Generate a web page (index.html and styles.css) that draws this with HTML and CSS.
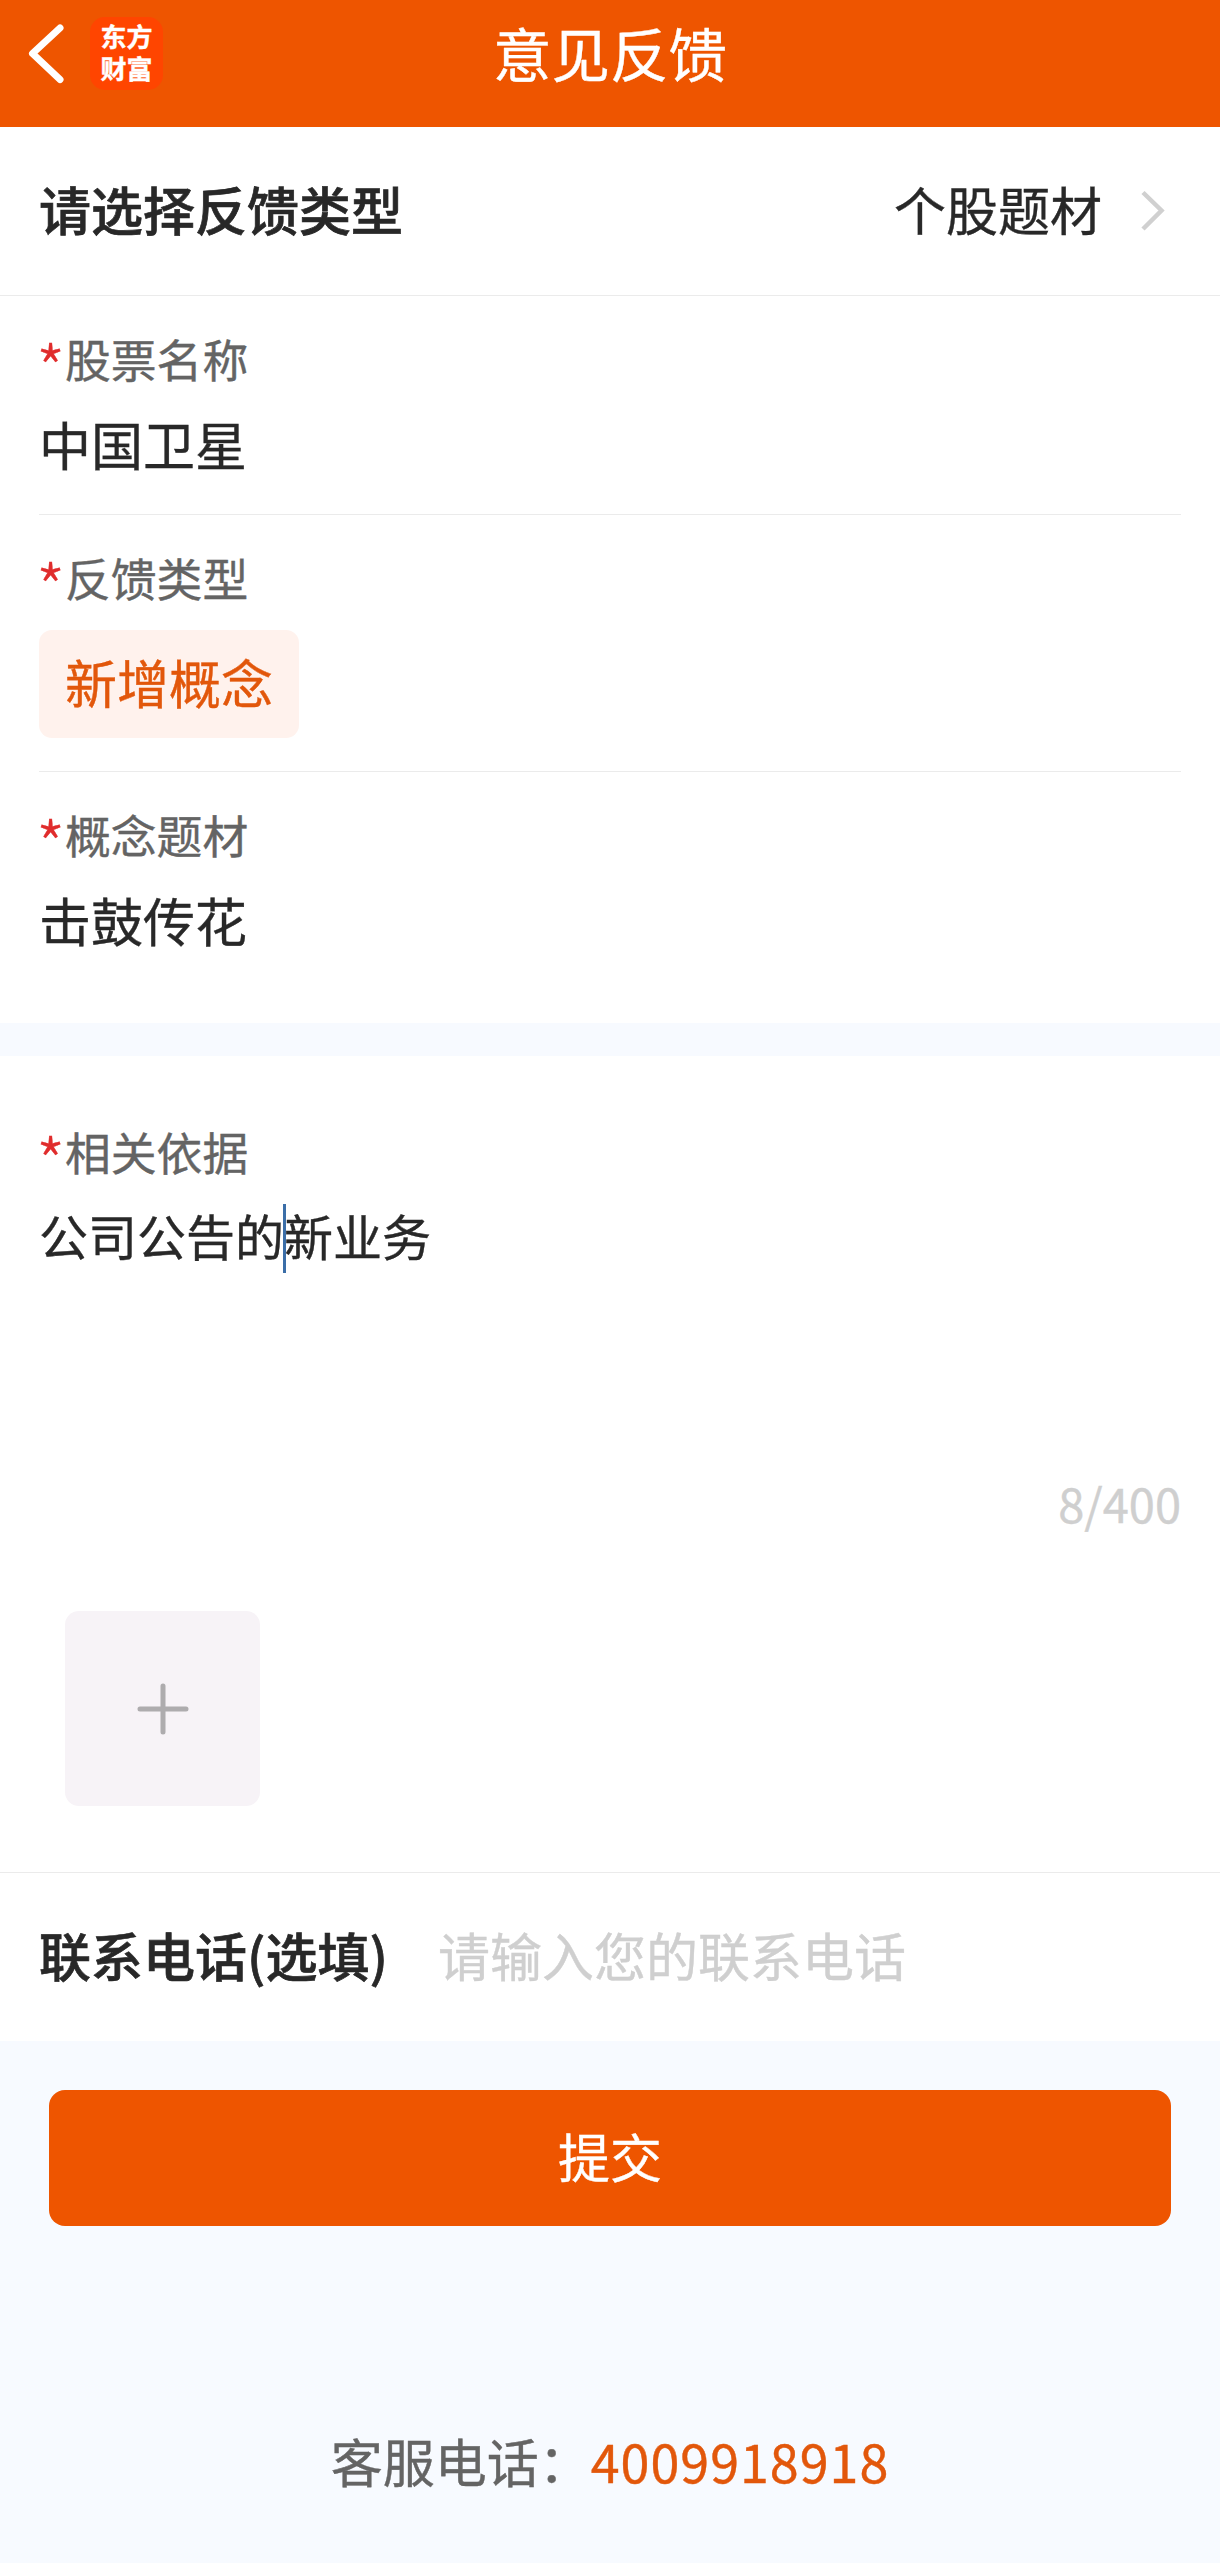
FILE: index.html
```html
<!DOCTYPE html>
<html lang="zh-CN">
<head>
<meta charset="utf-8">
<title>意见反馈</title>
<link rel="stylesheet" href="styles.css">
</head>
<body>
<header class="topbar">
  <div class="topbar-side">
    <svg class="back" width="36" height="60" viewBox="0 0 36 60" fill="none" stroke="#fff" stroke-width="7" stroke-linecap="round" stroke-linejoin="round"><path d="M32 4 4.500 29.500 32 55.500" /></svg>
    <div class="logo"><span>东方</span><span>财富</span></div>
  </div>
  <h1 class="title">意见反馈</h1>
  <div class="topbar-side"></div>
</header>
<main>
  <section class="row type-row">
    <span class="strong">请选择反馈类型</span>
    <span class="type-value">个股题材</span>
    <svg width="26" height="42" viewBox="0 0 26 42" fill="none" stroke="#d0d0d0" stroke-width="4.500"><path d="M3 2.500 21.500 20.500 3 39" /></svg>
  </section>
  <section class="fields">
    <div class="field">
      <div class="label"><span class="star">*</span>股票名称</div>
      <div class="value">中国卫星</div>
    </div>
    <div class="field field-tag">
      <div class="label"><span class="star">*</span>反馈类型</div>
      <span class="tag">新增概念</span>
    </div>
    <div class="field field-last">
      <div class="label"><span class="star">*</span>概念题材</div>
      <div class="value">击鼓传花</div>
    </div>
  </section>
  <section class="basis">
    <div class="label"><span class="star">*</span>相关依据</div>
    <div class="basis-text">公司公告的<span class="caret"></span>新业务</div>
    <div class="counter">8/400</div>
    <div class="upload">
      <svg width="52" height="52" viewBox="0 0 52 52" stroke="#aeacae" stroke-width="5" stroke-linecap="round"><path d="M26 3V49M3 26H49" /></svg>
    </div>
  </section>
  <section class="row contact">
    <span class="strong">联系电话(选填)</span>
    <span class="placeholder">请输入您的联系电话</span>
  </section>
  <div class="submit">提交</div>
  <footer class="service"><span>客服电话：</span><span class="phone">4009918918</span></footer>
</main>
</body>
</html>
```
FILE: styles.css
```css
* { box-sizing: border-box; }
body {
  margin: 0;
  min-height: 2563px;
  background: #f7faff;
  color: #282828;
  font-family: "Noto Sans CJK SC", sans-serif;
  font-size: 52px;
  line-height: 60px;
  -webkit-text-stroke: 0.4px currentColor;
}
.topbar {
  display: flex;
  height: 127px;
  background: #ee5500;
  color: #fff;
}
.topbar-side {
  flex: 1;
  display: flex;
  align-items: flex-start;
  padding: 17px 0 0 28px;
}
.topbar-side:last-child { padding: 0 28px 0 0; }
.back { margin-top: 7px; }
.logo {
  display: flex;
  flex-direction: column;
  width: 73px;
  height: 73px;
  margin-left: 26px;
  padding-top: 3px;
  border-radius: 15px;
  background: #ff4500;
  font-size: 26px;
  font-weight: 700;
  line-height: 32px;
  text-align: center;
}
.title {
  margin: 0;
  padding-top: 22px;
  font-size: 58.500px;
  font-weight: 400;
}
.row {
  display: flex;
  align-items: center;
  height: 169px;
  padding: 0 39px 4px;
  background: #fff;
}
.strong {
  font-weight: 500;
  -webkit-text-stroke-width: 0.700px;
}
.type-row { border-bottom: 1px solid #ebebeb; }
.type-row svg { margin: 3px 15px 0 38px; }
.type-value { margin-left: auto; }
.fields { padding: 0 39px; background: #fff; }
.field {
  padding: 32px 0 40px;
  border-bottom: 1px solid #ebebeb;
}
.label {
  display: flex;
  color: #646464;
  font-size: 45.800px;
}
.star {
  width: 29px;
  height: 60px;
  margin-left: -3px;
  color: #e02c2c;
  font-size: 66px;
  font-weight: 300;
  line-height: 77px;
}
.value { margin-top: 26px; }
.field-tag { padding-bottom: 33px; }
.tag {
  display: block;
  width: 260px;
  height: 108px;
  margin-top: 23px;
  border-radius: 13px;
  background: #fff2ed;
  color: #e2570b;
  line-height: 104px;
  text-align: center;
}
.field-last { padding-bottom: 73px; border-bottom: 0; }
.basis {
  margin-top: 33px;
  padding: 65px 39px 66px;
  border-bottom: 1px solid #ebebeb;
  background: #fff;
}
.basis-text {
  height: 268px;
  margin-top: 24px;
  font-size: 49px;
}
.caret { position: relative; }
.caret::after {
  content: "";
  position: absolute;
  top: 5px;
  left: -1px;
  width: 3px;
  height: 69px;
  background: #3b6ea8;
}
.counter {
  color: #cfcfcf;
  font-size: 47px;
  text-align: right;
}
.upload {
  display: flex;
  align-items: center;
  justify-content: center;
  width: 195px;
  height: 195px;
  margin: 78px 0 0 26px;
  border-radius: 14px;
  background: #f7f3f7;
}
.contact { height: 168px; }
.placeholder { margin-left: 50px; color: #cfcfcf; }
.submit {
  height: 136px;
  margin: 49px 49px 0;
  border-radius: 16px;
  background: #ee5500;
  color: #fff;
  line-height: 132px;
  text-align: center;
}
.service {
  display: flex;
  justify-content: center;
  margin-top: 205px;
  color: #646464;
}
.phone { color: #e2570b; letter-spacing: 1px; }
```
